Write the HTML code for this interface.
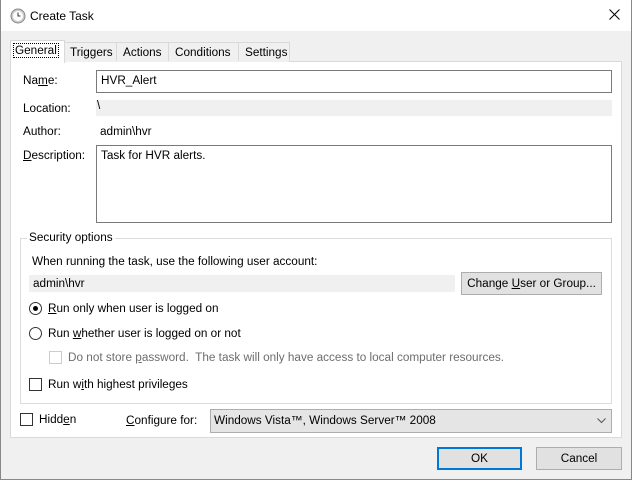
<!DOCTYPE html>
<html><head><meta charset="utf-8"><style>
*{box-sizing:border-box;margin:0;padding:0}
body{width:632px;height:480px;overflow:hidden;background:#f0f0f0;font-family:"Liberation Sans",sans-serif;font-size:11.75px;color:#000;position:relative}
.a{position:absolute;white-space:nowrap}
.box{position:absolute;background:#fff;border:1px solid #7a7a7a}
.btn{position:absolute;background:#e1e1e1;border:1px solid #adadad;text-align:center}
.cb{position:absolute;width:13px;height:13px;border:1px solid #333;background:#fff}
.rb{position:absolute;width:13px;height:13px;border:1px solid #333;border-radius:50%;background:#fff}
u{text-decoration:underline}
</style></head><body>
<div class="a" style="left:0;top:0;width:632px;height:31px;background:#fff"></div>
<div class="a" style="left:0;top:0;width:1px;height:480px;background:#888"></div>
<div class="a" style="left:631px;top:0;width:1px;height:480px;background:#888"></div>
<div class="a" style="left:0;top:479px;width:632px;height:1px;background:#888"></div>
<svg class="a" style="left:10px;top:8px" width="16" height="16"><circle cx="8" cy="8" r="7" fill="#ccc" stroke="#888"/><circle cx="8" cy="8" r="5" fill="#fff"/><path d="M8 4.5V8H10.5" stroke="#333" fill="none"/></svg>
<div class="a" style="left:30px;top:9px;font-size:12px">Create Task</div>
<svg class="a" style="left:609px;top:9px" width="11" height="11"><path d="M0.5 0.5L10.5 10.5M10.5 0.5L0.5 10.5" stroke="#000"/></svg>

<div class="a" style="left:10px;top:61px;width:612px;height:377px;background:#fff;border:1px solid #d9d9d9"></div>
<div class="a" style="left:64px;top:42px;width:226px;height:20px;background:#f0f0f0;border:1px solid #d9d9d9;border-bottom:none"></div>
<div class="a" style="left:116px;top:42px;width:1px;height:19px;background:#d9d9d9"></div>
<div class="a" style="left:168px;top:42px;width:1px;height:19px;background:#d9d9d9"></div>
<div class="a" style="left:238px;top:42px;width:1px;height:19px;background:#d9d9d9"></div>
<div class="a" style="left:10px;top:40px;width:55px;height:23px;background:#fff;border:1px solid #d9d9d9;border-bottom:none"></div>
<div class="a" style="left:14px;top:44px;padding:0 1px;outline:1px dotted #000">General</div>
<div class="a" style="left:70px;top:46px">Triggers</div>
<div class="a" style="left:123px;top:46px">Actions</div>
<div class="a" style="left:175px;top:46px">Conditions</div>
<div class="a" style="left:245px;top:46px">Settings</div>

<div class="a" style="left:23px;top:74px">Na<u>m</u>e:</div>
<div class="box" style="left:96px;top:70px;width:516px;height:23px"></div>
<div class="a" style="left:101px;top:74px">HVR_Alert</div>
<div class="a" style="left:23px;top:102px">Location:</div>
<div class="a" style="left:96px;top:100px;width:516px;height:16px;background:#f0f0f0"></div>
<div class="a" style="left:97px;top:99px">\</div>
<div class="a" style="left:23px;top:125px">Author:</div>
<div class="a" style="left:100px;top:125px">admin\hvr</div>
<div class="a" style="left:23px;top:149px"><u>D</u>escription:</div>
<div class="box" style="left:96px;top:145px;width:516px;height:78px"></div>
<div class="a" style="left:101px;top:149px">Task for HVR alerts.</div>

<div class="a" style="left:20px;top:238px;width:592px;height:166px;border:1px solid #dcdcdc"></div>
<div class="a" style="left:27px;top:231px;background:#fff;padding:0 2px">Security options</div>
<div class="a" style="left:32px;top:255px">When running the task, use the following user account:</div>
<div class="a" style="left:29px;top:275px;width:426px;height:17px;background:#f0f0f0"></div>
<div class="a" style="left:33px;top:277px">admin\hvr</div>
<div class="btn" style="left:461px;top:272px;width:141px;height:23px;line-height:21px">Change <u>U</u>ser or Group...</div>
<div class="rb" style="left:29px;top:302px"></div><div class="a" style="left:33px;top:306px;width:5px;height:5px;border-radius:50%;background:#000"></div>
<div class="a" style="left:48px;top:302px"><u>R</u>un only when user is logged on</div>
<div class="rb" style="left:29px;top:327px"></div>
<div class="a" style="left:48px;top:327px">Run <u>w</u>hether user is logged on or not</div>
<div class="cb" style="left:49px;top:351px;border-color:#ccc"></div>
<div class="a" style="left:68px;top:351px;color:#6d6d6d">Do not store <u>p</u>assword.&nbsp; The task will only have access to local computer resources.</div>
<div class="cb" style="left:29px;top:378px"></div>
<div class="a" style="left:48px;top:378px">Run w<u>i</u>th highest privileges</div>

<div class="cb" style="left:20px;top:413px"></div>
<div class="a" style="left:39px;top:413px">Hidd<u>e</u>n</div>
<div class="a" style="left:126px;top:414px"><u>C</u>onfigure for:</div>
<div class="a" style="left:210px;top:409px;width:402px;height:24px;background:#e5e5e5;border:1px solid #adadad"></div>
<div class="a" style="left:214px;top:414px">Windows Vista™, Windows Server™ 2008</div>
<svg class="a" style="left:597px;top:418px" width="9" height="6"><path d="M0.5 0.5L4.5 4.5L8.5 0.5" stroke="#555" fill="none"/></svg>

<div class="btn" style="left:437px;top:447px;width:85px;height:23px;line-height:20px;border:2px solid #0078d7">OK</div>
<div class="btn" style="left:536px;top:447px;width:86px;height:23px;line-height:21px">Cancel</div>
</body></html>
